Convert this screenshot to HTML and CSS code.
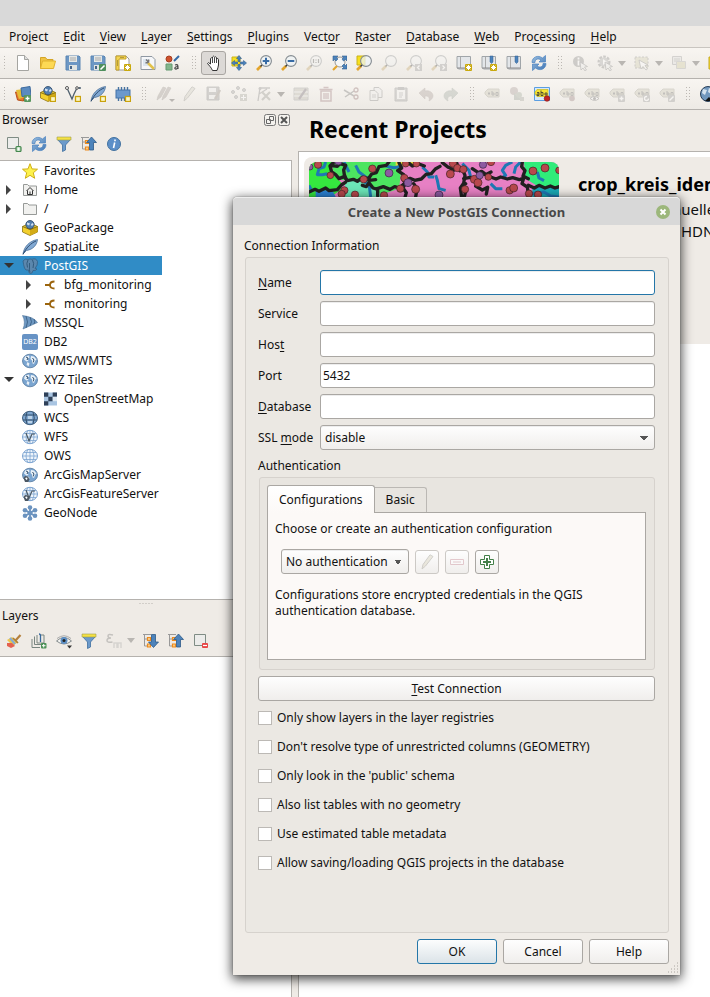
FILE: index.html
```html
<!DOCTYPE html>
<html lang="en">
<head>
<meta charset="utf-8">
<title>QGIS</title>
<link rel="stylesheet" href="styles.css">
</head>
<body>
<svg class="sprite" aria-hidden="true">
  <defs>
    <linearGradient id="gb" x1="0" y1="0" x2="1" y2="1"><stop offset="0" stop-color="#9cbfe0"/><stop offset="1" stop-color="#3f76b5"/></linearGradient>
  </defs>
  <symbol id="star-badge" viewBox="0 0 16 16"><rect x="9" y="9" width="7" height="7" rx="1" fill="#c9a90d"/><path d="M12.500 10v5M10 12.500h5M10.700 10.700l3.600 3.600M14.300 10.700l-3.600 3.600" stroke="#fff" stroke-width="1"/></symbol>
  <symbol id="box-badge" viewBox="0 0 16 16"><rect x="10.500" y="10.500" width="5" height="5" fill="#fcf7c6" stroke="#c9a20d" stroke-width="1.300"/></symbol>
  <symbol id="new" viewBox="0 0 16 16"><path d="M2.500.5h7l4 4v11h-11z" fill="#fff" stroke="#a5a5a1"/><path d="M9.500.5v4h4" fill="#ddd" stroke="#a5a5a1"/></symbol>
  <symbol id="open" viewBox="0 0 16 16"><path d="M.5 13.500v-11h5l1.500 2h6v3" fill="#f0c344" stroke="#d4a526"/><path d="M.5 13.500l2-7.500h13l-2 7.500z" fill="#fdd954" stroke="#dfb12f"/></symbol>
  <symbol id="save" viewBox="0 0 16 16"><path d="M1 1h13l1 1v13H1z" fill="#6d97c4" stroke="#5a86b3"/><path d="M4 1h8v6H4z" fill="#e5e8e6"/><path d="M5 3h6M5 5h6" stroke="#aaa"/><path d="M4 10h8v5H4z" fill="#e1e4e1"/><path d="M5 11h2v3H5z" fill="#47658a"/></symbol>
  <symbol id="saveas" viewBox="0 0 16 16"><use href="#save"/><rect x="9" y="9" width="7" height="7" rx="1" fill="#4e8f5d"/><path d="M10.500 14.500l4-4" stroke="#fff" stroke-width="1.600"/></symbol>
  <symbol id="layout" viewBox="0 0 16 16"><path d="M1 1h10l3 3v11H1z" fill="#fff" stroke="#999"/><path d="M1 1h10v3H4v11H1z" fill="#f3d553" stroke="#c5a22d"/><path d="M2 6h1M2 8h1M2 10h1M6 2v1M8 2v1" stroke="#776322"/><use href="#star-badge"/></symbol>
  <symbol id="layoutman" viewBox="0 0 16 16"><path d="M1 1.500h11l3 3v10H1z" fill="#f6f7f9" stroke="#8f98a2"/><path d="M3 4h6v7H3z" fill="#dce6f0"/><path d="M8 8l6 6" stroke="#e2c24b" stroke-width="2.500"/><path d="M6 4.500l3 3M5.500 7.500c2 1 4-1 3-3" fill="none" stroke="#777" stroke-width="1.500"/></symbol>
  <symbol id="style" viewBox="0 0 16 16"><circle cx="4" cy="4" r="3" fill="#cf512c" stroke="#a43e20"/><path d="M9 6l5-5" stroke="#346aa5" stroke-width="2"/><path d="M1 9h6v6H1z" fill="#83b58b" stroke="#649a70"/><path d="M10 10c3-1 3 0 3 4M13 11.500c-4 0-4 3-1.500 2.500L13 13" fill="none" stroke="#444" stroke-width="1.200"/></symbol>
  <symbol id="hand" viewBox="0 0 16 16"><path d="M4.500 9V3.500q1-1.500 2 0V2q1-1.700 2 0v.500q1-1.500 2 0V4q1.700-1.300 2 .5V10q-.5 3-1.500 5.500H6.500C5 12 3 10.500 1.500 8.500q.500-2 3 .500z" fill="#fff" stroke="#333"/><path d="M6.500 3.500V8M8.500 3v5M10.500 4v4" stroke="#333" stroke-width=".9"/></symbol>
  <symbol id="panto" viewBox="0 0 16 16"><path d="M1 2h8v9H1z" fill="#f7e01d" stroke="#c9b21a"/><path d="M8 .5l2.500 3h-1.500v3H7v-3H5.500zM8 15.500l2.500-3h-1.500v-3H7v3H5.500zM.5 8l3-2.500v1.500h3v2h-3v1.500zM15.500 8l-3-2.500v1.500h-3v2h3v1.500z" fill="#4c83bb" stroke="#335f91" stroke-width=".6"/></symbol>
  <symbol id="lens" viewBox="0 0 16 16"><path d="M1 15l4-4" stroke="#e3a52d" stroke-width="2.600"/><path d="M4.500 11.500l2-2" stroke="#333" stroke-width="1.500"/><circle cx="10" cy="6" r="5.400" fill="#eef3f6" fill-opacity=".75" stroke="#858c91" stroke-width="1.100"/></symbol>
  <symbol id="zin" viewBox="0 0 16 16"><use href="#lens"/><path d="M10 2.700v6.600M6.700 6h6.600" stroke="#376ba5" stroke-width="2"/></symbol>
  <symbol id="zout" viewBox="0 0 16 16"><use href="#lens"/><path d="M6.700 6h6.600" stroke="#376ba5" stroke-width="2"/></symbol>
  <symbol id="znat" viewBox="0 0 16 16"><use href="#lens"/><path d="M7.500 4v4M12.500 4v4M10 4.500v1M10 7v1" stroke="#555" stroke-width="1.200"/></symbol>
  <symbol id="zfull" viewBox="0 0 16 16"><circle cx="9" cy="7" r="5" fill="#f5f6f6" stroke="#999"/><path d="M2 15l4-4" stroke="#e3a52d" stroke-width="2.200"/><path d="M2 1h5L5.500 2.500 7 4 5 6 3.500 4.500 2 6zM16 1v5l-1.500-1.500L12.500 6 11 4l1.500-1.500L11 1zM16 14h-5l1.500-1.500L11 11l2-2 1.500 1.500L16 9z" fill="#4c83bb" stroke="#335f91" stroke-width=".6"/></symbol>
  <symbol id="zsel" viewBox="0 0 16 16"><path d="M1 1h8v9H1z" fill="#f7e01d" stroke="#c9b21a"/><use href="#lens"/></symbol>
  <symbol id="zlast" viewBox="0 0 16 16"><use href="#lens"/><rect x="9" y="9" width="7" height="7" fill="#999"/><path d="M13.500 10.500l-2 2 2 2" stroke="#fff" fill="none" stroke-width="1.300"/></symbol>
  <symbol id="znext" viewBox="0 0 16 16"><use href="#lens"/><rect x="9" y="9" width="7" height="7" fill="#999"/><path d="M11.500 10.500l2 2-2 2" stroke="#fff" fill="none" stroke-width="1.300"/></symbol>
  <symbol id="book" viewBox="0 0 16 16"><path d="M1 1.500h13.500v12.500H2.500L1 12.500z" fill="#e3e6e9" stroke="#a0a5a9"/><path d="M4.500 2v11" stroke="#aaa"/><path d="M1 13h13" stroke="#888"/></symbol>
  <symbol id="book3" viewBox="0 0 16 16"><use href="#book"/><use href="#star-badge"/></symbol>
  <symbol id="bookmark" viewBox="0 0 16 16"><use href="#book"/><path d="M9 1h3v6l-1.500 1.500L9 7z" fill="#4c83bb" stroke="#335f91" stroke-width=".5"/></symbol>
  <symbol id="bookmarkn" viewBox="0 0 16 16"><use href="#bookmark"/><use href="#star-badge"/></symbol>
  <symbol id="refresh" viewBox="0 0 16 16"><path d="M1 7.500C1 2 7-.5 11.500 3L14.500.5V7H8l2-2C7 3 4 4 4 7.500zM15 8.500C15 14 9 16.500 4.500 13l-3 2.500V9H8l-2 2c3 2 6 1 6-2.500z" fill="url(#gb)" stroke="#4b83c0" stroke-width=".7"/></symbol>
  <symbol id="cursor" viewBox="0 0 16 16"><path d="M8 7l1 8 2-2 2 3 1.500-1-2-3 3-.5z" fill="#eee" stroke="#777" stroke-width=".8"/></symbol>
  <symbol id="ident" viewBox="0 0 16 16"><circle cx="6.500" cy="6.500" r="5.500" fill="#888"/><path d="M6.500 2.500v2M6.500 5.500v5" stroke="#fff" stroke-width="1.800"/><use href="#cursor"/></symbol>
  <symbol id="action" viewBox="0 0 16 16"><circle cx="7" cy="7" r="5" fill="none" stroke="#888" stroke-width="3" stroke-dasharray="2.500 1.200"/><circle cx="7" cy="7" r="4.500" fill="#aaa"/><path d="M6 4l4 3-4 3z" fill="#fff"/><use href="#cursor"/></symbol>
  <symbol id="select" viewBox="0 0 16 16"><path d="M1 2h13v11H1z" fill="#d5cf98" stroke="#888" stroke-dasharray="2 1.500"/><path d="M5 5l2 9 2-2.500L12 15l1.500-1L11 10.500l3-.5z" fill="#fff" stroke="#777" stroke-width=".8"/></symbol>
  <symbol id="desel" viewBox="0 0 16 16"><path d="M1.500 1.500h9v8h-9z" fill="#ddd" stroke="#999"/><path d="M3 4h6M3 6h6" stroke="#999"/><path d="M5.500 6.500h9v7h-9z" fill="#d8ce78" stroke="#aaa"/></symbol>
  <symbol id="yellow" viewBox="0 0 16 16"><path d="M1 2h14v12H1z" fill="#f5d829" stroke="#c5a81f"/></symbol>
  <symbol id="dsm" viewBox="0 0 16 16"><path d="M.5 6l9 1-1 8-6-1z" fill="#e6782e" stroke="#b8501a"/><path d="M1 4l8-1 1 8-6 2z" fill="#e4bd35"/><path d="M6 2l9-1.500 1 9-9 1z" fill="#5b8bc0" stroke="#3e6a9d"/><rect x="9" y="9" width="7" height="7" rx="1" fill="#58965f"/><path d="M12.500 10.500v4M10.500 12.500h4" stroke="#fff" stroke-width="1.300"/></symbol>
  <symbol id="gpkg" viewBox="0 0 16 16"><path d="M.5 6.500L8 3l7.500 3.500V12L8 15.500.5 12z" fill="#f2cf2d" stroke="#8d7415" stroke-width=".8"/><path d="M8 9.500l7.500-3V12L8 15.500z" fill="#d3ab16"/><circle cx="8" cy="4.700" r="4.200" fill="#537fb0" stroke="#2c4666" stroke-width=".8"/><path d="M5 2.500l3 1-1 2-2-1zM9 4l2-1 .5 2-2 1z" fill="#d4e2f0"/><path d="M.5 6.500L8 9.500l7.500-3" stroke="#6b5a17" fill="none" stroke-width=".8"/></symbol>
  <symbol id="gpkgn" viewBox="0 0 16 16"><use href="#gpkg"/><use href="#box-badge"/></symbol>
  <symbol id="vec" viewBox="0 0 16 16"><path d="M2 2l5 11 2-5 3-6h3" fill="none" stroke="#4f606e" stroke-width="1.300"/><circle cx="2" cy="2" r="1.500" fill="#fff" stroke="#555"/><circle cx="12" cy="2" r="1.300" fill="#fff" stroke="#555"/><circle cx="15" cy="2" r="1" fill="#567"/></symbol>
  <symbol id="vecn" viewBox="0 0 16 16"><use href="#vec"/><use href="#box-badge"/></symbol>
  <symbol id="feather" viewBox="0 0 16 16"><path d="M1 15C2 8 7 2 15.500.500 15 6 11 10.500 4.500 11.500z" fill="#82a9d3" stroke="#4d719a" stroke-width=".8"/><path d="M1 15.500C4 9 9 4 14 2" fill="none" stroke="#304d6e"/></symbol>
  <symbol id="feathern" viewBox="0 0 16 16"><use href="#feather"/><use href="#box-badge"/></symbol>
  <symbol id="chip" viewBox="0 0 16 16"><path d="M3.500 1v14M6.500 1v14M9.500 1v14M12.500 1v14" stroke="#47729f" stroke-width="1.400"/><rect x="1" y="4" width="14" height="8" fill="#6b99cd" stroke="#4473a8"/><use href="#box-badge"/></symbol>
  <symbol id="pens" viewBox="0 0 16 16"><path d="M1 14l1-4 5-9 3 1-5 9zM6 14l1-4 5-9 3 1-5 9z" fill="#a5968c" stroke="#8b7d74" stroke-width=".6"/></symbol>
  <symbol id="pencil" viewBox="0 0 16 16"><path d="M3 15l1-4.500L11 .8l3 1.700L6.500 12z" fill="#d6d1b9" stroke="#96948a"/></symbol>
  <symbol id="saveed" viewBox="0 0 16 16"><path d="M1 1h12v13H1z" fill="#999" stroke="#888"/><path d="M3 2h7v4H3zM3 9h7v4H3z" fill="#eee"/><path d="M9 13l5-9" stroke="#987" stroke-width="2.500"/></symbol>
  <symbol id="points" viewBox="0 0 16 16"><g fill="#aaa" stroke="#888"><circle cx="2" cy="6" r="1.500"/><circle cx="7" cy="2" r="1.500"/><circle cx="13" cy="4" r="1.500"/><circle cx="5" cy="11" r="1.500"/></g><rect x="9" y="8" width="7" height="7" fill="#aa9"/><path d="M12.500 9v5M10 11.500h5" stroke="#fff"/></symbol>
  <symbol id="vertex" viewBox="0 0 16 16"><path d="M2 15L4 2h10M3 8l8-5" fill="none" stroke="#888" stroke-width="1.300"/><path d="M6 6l8 8M14 6l-8 8" stroke="#998" stroke-width="2.200"/><circle cx="4" cy="2.500" r="1.500" fill="#888"/></symbol>
  <symbol id="formed" viewBox="0 0 16 16"><path d="M1 2h14v12H1z" fill="#bdb7a0" stroke="#999"/><path d="M1 6h14M1 10h14" stroke="#eee"/><path d="M6 13l7-10" stroke="#767" stroke-width="2.200"/></symbol>
  <symbol id="trash" viewBox="0 0 16 16"><path d="M3 5h10v10H3z" fill="none" stroke="#b56f78" stroke-width="1.500"/><path d="M1.500 3.500h13M5.500 1.500h5M6 7v6M8 7v6M10 7v6" stroke="#b56f78" stroke-width="1.300"/></symbol>
  <symbol id="cut" viewBox="0 0 16 16"><path d="M1 4l10 6M2 11l9-6" stroke="#777" stroke-width="1.500"/><circle cx="13" cy="4" r="2" fill="none" stroke="#a66" stroke-width="1.300"/><circle cx="13" cy="11" r="2" fill="none" stroke="#a66" stroke-width="1.300"/></symbol>
  <symbol id="copy" viewBox="0 0 16 16"><path d="M6 1.500h5l3 3v7H6z" fill="#eee" stroke="#888"/><path d="M2 4.500h5l3 3v7H2z" fill="#eee" stroke="#888"/><path d="M4 9h4M4 11h4" stroke="#999"/></symbol>
  <symbol id="paste" viewBox="0 0 16 16"><path d="M2 2h12v13H2z" fill="#aaa" stroke="#888"/><path d="M4 4h8v9H4z" fill="#f4f4f4"/><path d="M5 1h6v3H5z" fill="#888"/><path d="M6 7h4M6 9h4M6 11h3" stroke="#999"/></symbol>
  <symbol id="undo" viewBox="0 0 16 16"><path d="M1 7l6-5v3c5-1 8 2 8 5 0 2-2 4-4 5 1-3 0-5-4-5v3z" fill="#b39c93" stroke="#a1887d" stroke-width=".6"/></symbol>
  <symbol id="redo" viewBox="0 0 16 16"><path d="M15 7L9 2v3c-5-1-8 2-8 5 0 2 2 4 4 5-1-3 0-5 4-5v3z" fill="#9dab9d" stroke="#879787" stroke-width=".6"/></symbol>
  <symbol id="tag" viewBox="0 0 16 16"><path d="M1 6l3-3h11v8H4L1 8z" fill="#cfc8a2" stroke="#aaa48a"/><path d="M4 7.500h2M5 6v3M8 5v4h2V7H8M14 6.500h-2v3h2z" stroke="#666" fill="none"/></symbol>
  <symbol id="diag" viewBox="0 0 16 16"><circle cx="5" cy="5" r="4" fill="#b59a94"/><path d="M5 7l8 7H5z" fill="#92a68f"/><circle cx="10" cy="9" r="3" fill="#9eae94"/><rect x="11" y="11" width="4" height="4" fill="#aa9"/></symbol>
  <symbol id="tagon" viewBox="0 0 16 16"><path d="M.5 1.500h15v13H.5z" fill="#d7e9fa" stroke="#5a9ee2"/><path d="M1 6l2-2.500h11v7H3L1 8z" fill="#f5e332" stroke="#c9b71a" stroke-width=".7"/><path d="M3 6.500h2v3H3v-1.500h2M7 4.500v5h2V6.500H7M11 7h2v2h-2z" stroke="#333" stroke-width=".8" fill="none"/><circle cx="13" cy="12.500" r="2.800" fill="#c22424" stroke="#8c1515" stroke-width=".6"/></symbol>
  <symbol id="tagpin" viewBox="0 0 16 16"><use href="#tag"/><circle cx="13" cy="12.500" r="2.800" fill="#b07f7c"/></symbol>
  <symbol id="tageye" viewBox="0 0 16 16"><use href="#tag"/><path d="M6 12.500q4-4 9 0-4 4-9 0z" fill="#fff" stroke="#777"/><circle cx="10.500" cy="12.500" r="1.500" fill="#666"/></symbol>
  <symbol id="tagplus" viewBox="0 0 16 16"><use href="#tag"/><rect x="9" y="9" width="7" height="7" rx="1" fill="#999"/><path d="M12.500 10.500v4M10.500 12.500h4" stroke="#fff" stroke-width="1.500"/></symbol>
  <symbol id="tagrot" viewBox="0 0 16 16"><use href="#tag"/><rect x="9" y="9" width="7" height="7" rx="1" fill="#999"/><circle cx="12.500" cy="12.500" r="2" stroke="#fff" fill="none" stroke-width="1.300" stroke-dasharray="9 3"/></symbol>
  <symbol id="taged" viewBox="0 0 16 16"><use href="#tag"/><rect x="9" y="9" width="7" height="7" rx="1" fill="#999"/><path d="M10.500 14.500l4-4" stroke="#fff" stroke-width="1.500"/></symbol>
  <symbol id="metas" viewBox="0 0 16 16"><circle cx="8" cy="8" r="7.500" fill="#7197bd" stroke="#293f58"/><path d="M3 3l4 1-2 5-3-2zM9 2l4 2-2 4-3-2z" fill="#d5e2ee"/><path d="M5 15l4-4 2 2 5-2v4z" fill="#111"/></symbol>
  <symbol id="addl" viewBox="0 0 16 16"><path d="M1.500 1.500h11v11h-11z" fill="#ececea" stroke="#7f8c84"/><rect x="10" y="10.500" width="5" height="5" rx="1" fill="#b9d8bb" stroke="#43874d" stroke-width="1.200"/><path d="M12.500 11.500v3M11 13h3" stroke="#fff" stroke-width=".8"/></symbol>
  <symbol id="reml" viewBox="0 0 16 16"><path d="M1.500 1.500h11v11h-11z" fill="#ececea" stroke="#7f8c84"/><rect x="9" y="10" width="6" height="5" rx="1" fill="#e84545"/><path d="M10 12.500h4" stroke="#fff" stroke-width="1.200"/></symbol>
  <symbol id="filter" viewBox="0 0 16 16"><path d="M1.500 3.500L6.500 9v6.500l3-1.500V9l5-5.500z" fill="#6c9acb" stroke="#3f6e9f" stroke-width=".8"/><path d="M1 1h14v3H1z" fill="#f5e143" stroke="#9b9a4d" stroke-width=".6"/></symbol>
  <symbol id="tree" viewBox="0 0 16 16"><path d="M1.500 1v12H4M1.500 6H4M0 1.500h8" fill="none" stroke="#999"/><path d="M4.500 4.500h3v3h-3zM4.500 11h3v3h-3z" fill="#f8d08e" stroke="#ee8b1e" stroke-width="1.200"/></symbol>
  <symbol id="collapse" viewBox="0 0 16 16"><use href="#tree"/><path d="M10.500 1L15.500 6.500h-3V14H8.500V6.500H5.500z" fill="#4d83bb" stroke="#2e5a88" stroke-width=".8"/></symbol>
  <symbol id="expand" viewBox="0 0 16 16"><use href="#tree"/><path d="M10.500 14.500L15.500 9h-3V1.500H8.500V9H5.500z" fill="#4d83bb" stroke="#2e5a88" stroke-width=".8"/></symbol>
  <symbol id="info" viewBox="0 0 16 16"><circle cx="8" cy="8" r="6.500" fill="#5c8fc8" stroke="#43729f"/><path d="M9 3.500v1.800M8.700 6.500L7.500 12" stroke="#fff" stroke-width="1.600"/></symbol>
  <symbol id="fav" viewBox="0 0 16 16"><path d="M8 .700l2 5.200 5.500.300-4.200 3.600 1.400 5.500L8 12.300l-4.700 3 1.400-5.500L.5 6.200 6 5.900z" fill="#fdf24c" stroke="#cfae17"/></symbol>
  <symbol id="folder" viewBox="0 0 16 16"><path d="M1.500 13.500v-11h4l1.500 1.500h7.500v9.500z" fill="#f1f1ef" stroke="#979a98"/></symbol>
  <symbol id="home" viewBox="0 0 16 16"><use href="#folder"/><path d="M4.500 9L8 5.500 11.500 9M5.500 8.500v4h5v-4M8 12V9.500" fill="none" stroke="#333"/></symbol>
  <symbol id="pg" viewBox="0 0 16 16"><path d="M1 3Q3 0 6 1.500 8 .5 10 1.300 14-.3 15.500 3.500 16 7 13 10.500l2 .5q-1 2-4 1.500-.5 3-2.500 3T6.500 12q-3 1-4-2T1 3z" fill="#5b87ad" stroke="#335f85" stroke-width=".8"/><path d="M6 2Q4 5 5.500 9.500M10.500 2Q12.500 5 11 10M7.500 5v4Q7 12 8 14.500" fill="none" stroke="#2d5677" stroke-width=".9"/></symbol>
  <symbol id="conn" viewBox="0 0 16 16"><path d="M3 8h5M12.500 4.500C6.500 4.500 6.500 11.500 12.500 11.500" fill="none" stroke="#9b640d" stroke-width="1.800"/></symbol>
  <symbol id="mssql" viewBox="0 0 16 16"><path d="M.5.500Q12 2 15.500 7.500L1 14Q4 7 .5.500z" fill="#6e98c2" stroke="#50779e" stroke-width=".6"/><path d="M4 1q3 6 0 12M8 2q3 5 0 9M12 4q1.500 3 0 5" fill="none" stroke="#34597f" stroke-width=".8"/></symbol>
  <symbol id="gl" viewBox="0 0 16 16"><ellipse cx="8" cy="8" rx="7.500" ry="6.800" fill="#7ba5d0" stroke="#52779e" stroke-width=".8"/><path d="M3 3.500l4-1 .5 2L5.500 6l1 2-2 .5L2 6.500zM9 3l3 .5 2.500 3-1.500 1.500-1 3-2-1V7.500L8.500 6zM5.500 9l2 1.500-1 3-2-2z" fill="#e8f0f7"/><path d="M4 4l2 1-1 2M10.500 5l1.500 2-1 2.500" fill="none" stroke="#304d6b"/></symbol>
  <symbol id="grid" viewBox="0 0 16 16"><ellipse cx="8" cy="8" rx="7.500" ry="6.700" fill="#edf4fb" stroke="#7ba3d0"/><path d="M.5 8h15M2 4.500h12M2 11.500h12M8 1.500v13M6 1.500Q2 8 6 14.500M10 1.500q4 6.500 0 13" fill="none" stroke="#7ba3d0" stroke-width=".8"/></symbol>
  <symbol id="wcs" viewBox="0 0 16 16"><ellipse cx="8" cy="8" rx="7.500" ry="6.700" fill="#7ea6d0" stroke="#40607f"/><path d="M1 5h14M1 10h14M5 2Q2.500 8 5 14M11 2q2.500 6 0 12" fill="none" stroke="#34506c"/><path d="M6 6h4v3H6zM6 11h4v2H6z" fill="#bcd3e8"/></symbol>
  <symbol id="wfs" viewBox="0 0 16 16"><use href="#grid"/><path d="M4 4l3 8 3-7h3" fill="none" stroke="#4a5965" stroke-width="1.200"/></symbol>
  <symbol id="arc" viewBox="0 0 16 16"><path d="M1.500 11l1.500-2 3 .5 1.500 3-1.500 2.500H3z" fill="#4b5763"/><path d="M3 11l2-.5.500 1.500-1 1z" fill="#fff"/></symbol>
  <symbol id="ams" viewBox="0 0 16 16"><use href="#gl"/><use href="#arc"/></symbol>
  <symbol id="afs" viewBox="0 0 16 16"><use href="#wfs"/><use href="#arc"/></symbol>
  <symbol id="xyz" viewBox="0 0 16 16"><path d="M2 1.500h13v13H2z" fill="#a9c5e2"/><path d="M2 1.500h4.300v4.300H2zM10.700 1.500H15v4.300h-4.300zM6.300 5.800h4.400v4.400H6.300zM2 10.200h4.300v4.300H2z" fill="#2f4058"/><path d="M10.700 5.800H15v4.400h-4.300z" fill="#dfe9f3"/></symbol>
  <symbol id="node" viewBox="0 0 16 16"><g stroke="#6b93bf" stroke-width="1.800"><path d="M8 2v12M3 5l10 6M13 5L3 11"/></g><g fill="#6b93bf"><circle cx="8" cy="2.500" r="2.300"/><circle cx="8" cy="13.500" r="2.300"/><circle cx="3" cy="5.200" r="2.300"/><circle cx="13" cy="5.200" r="2.300"/><circle cx="3" cy="10.800" r="2.300"/><circle cx="13" cy="10.800" r="2.300"/><circle cx="8" cy="8" r="2.500"/></g></symbol>
  <symbol id="brush" viewBox="0 0 16 16"><path d="M9 8l5.500-6" stroke="#b5803c" stroke-width="2.200"/><path d="M1 7l5-3 6 5-5 4z" fill="#efc649"/><path d="M1 10l5 0 3 3-4 2-4-2z" fill="#e4614f"/><path d="M4 5l5 6" stroke="#85abd4" stroke-width="2"/><path d="M7 5l5 5" stroke="#ab7c38" stroke-width="1.600"/></symbol>
  <symbol id="group" viewBox="0 0 16 16"><path d="M1 6v8.500h8M3.500 3.500v8h8M6 2v8h7V2H10" fill="none" stroke="#788580"/><path d="M9.500 9V3q0-2-1.500-2" fill="none" stroke="#35679c" stroke-width="1.300"/><rect x="10" y="10" width="5.500" height="5.500" rx="1" fill="#4c9157"/><path d="M12.700 11v3.500M11 12.700h3.500" stroke="#fff"/></symbol>
  <symbol id="eye" viewBox="0 0 16 16"><path d="M.5 8Q8 1 15.500 8 8 14 .5 8z" fill="#f5f5f3" stroke="#848a8c"/><path d="M1 5.500Q8 0 15 5.500" fill="none" stroke="#aaa"/><circle cx="8" cy="7.500" r="3.500" fill="#5d8fc4"/><circle cx="8" cy="7.500" r="1.500" fill="#222"/><path d="M11 12.500h5l-2.500 3z" fill="#333"/></symbol>
  <symbol id="eps" viewBox="0 0 16 16"><path d="M7 2Q2 .5 2 3q0 2 3 2-4 0-4 2.500T6.500 9" fill="none" stroke="#777" stroke-width="1.500"/><path d="M8 15v-5h3v5M12 15v-5h3v5" fill="none" stroke="#aaa" stroke-width="1.500"/></symbol>
  <symbol id="minus" viewBox="0 0 16 16"><path d="M1.500 5.500h13v5h-13zM4 8h8" fill="#fff" stroke="#c58591"/></symbol>
  <symbol id="plus" viewBox="0 0 16 16"><path d="M5.500 1.500h5v4h4v5h-4v4h-5v-4h-4v-5h4z" fill="#fff" stroke="#438049"/><path d="M8 4v8M4 8h8" stroke="#438049" stroke-width="2"/></symbol>
</svg>

<div class="app">
  <div class="window-title"></div>
  <nav class="menubar">
    <a href="#">Pro<u>j</u>ect</a><a href="#"><u>E</u>dit</a><a href="#"><u>V</u>iew</a><a href="#"><u>L</u>ayer</a><a href="#"><u>S</u>ettings</a><a href="#"><u>P</u>lugins</a><a href="#">Vect<u>o</u>r</a><a href="#"><u>R</u>aster</a><a href="#"><u>D</u>atabase</a><a href="#"><u>W</u>eb</a><a href="#">Pro<u>c</u>essing</a><a href="#"><u>H</u>elp</a>
  </nav>
  <div class="toolbar">
    <i class="handle first"></i>
    <button><svg><use href="#new"/></svg></button><button><svg><use href="#open"/></svg></button><button><svg><use href="#save"/></svg></button><button><svg><use href="#saveas"/></svg></button><button><svg><use href="#layout"/></svg></button><button><svg><use href="#layoutman"/></svg></button><button><svg><use href="#style"/></svg></button>
    <i class="handle"></i>
    <button class="pressed"><svg><use href="#hand"/></svg></button><button><svg><use href="#panto"/></svg></button><button><svg><use href="#zin"/></svg></button><button><svg><use href="#zout"/></svg></button><button disabled><svg><use href="#znat"/></svg></button><button><svg><use href="#zfull"/></svg></button><button><svg><use href="#zsel"/></svg></button><button disabled><svg><use href="#lens"/></svg></button><button disabled><svg><use href="#zlast"/></svg></button><button disabled><svg><use href="#znext"/></svg></button><button><svg><use href="#book3"/></svg></button><button><svg><use href="#bookmarkn"/></svg></button><button><svg><use href="#bookmark"/></svg></button><button><svg><use href="#refresh"/></svg></button>
    <i class="handle"></i>
    <button disabled><svg><use href="#ident"/></svg></button><button class="drop" disabled><svg><use href="#action"/></svg></button><button class="drop" disabled><svg><use href="#select"/></svg></button><button class="drop" disabled><svg><use href="#desel"/></svg></button><button><svg><use href="#yellow"/></svg></button>
  </div>
  <div class="toolbar">
    <i class="handle first"></i>
    <button><svg><use href="#dsm"/></svg></button><button><svg><use href="#gpkgn"/></svg></button><button><svg><use href="#vecn"/></svg></button><button><svg><use href="#feathern"/></svg></button><button><svg><use href="#chip"/></svg></button>
    <i class="handle"></i>
    <button class="mini" disabled><svg><use href="#pens"/></svg></button><button disabled><svg><use href="#pencil"/></svg></button><button disabled><svg><use href="#saveed"/></svg></button><button disabled><svg><use href="#points"/></svg></button><button class="drop" disabled><svg><use href="#vertex"/></svg></button><button disabled><svg><use href="#formed"/></svg></button><button disabled><svg><use href="#trash"/></svg></button><button disabled><svg><use href="#cut"/></svg></button><button disabled><svg><use href="#copy"/></svg></button><button disabled><svg><use href="#paste"/></svg></button><button disabled><svg><use href="#undo"/></svg></button><button disabled><svg><use href="#redo"/></svg></button>
    <i class="handle"></i>
    <button disabled><svg><use href="#tag"/></svg></button><button disabled><svg><use href="#diag"/></svg></button><button><svg><use href="#tagon"/></svg></button><button disabled><svg><use href="#tagpin"/></svg></button><button disabled><svg><use href="#tageye"/></svg></button><button disabled><svg><use href="#tagplus"/></svg></button><button disabled><svg><use href="#tagrot"/></svg></button><button disabled><svg><use href="#taged"/></svg></button>
    <i class="handle"></i>
    <button><svg><use href="#metas"/></svg></button>
  </div>

  <div class="main">
    <aside class="docks">
      <section class="dock browser">
        <header class="dock-title"><span>Browser</span>
          <button aria-label="Float"><svg viewBox="0 0 12 12"><rect x=".5" y=".5" width="11" height="11" rx="2" fill="#f4f2ee" stroke="#777"/><path d="M5.500 2.500h4v4h-4zM2.500 5.500h4v4h-4z" fill="none" stroke="#666"/></svg></button>
          <button aria-label="Close"><svg viewBox="0 0 12 12"><rect x=".5" y=".5" width="11" height="11" rx="2" fill="#f4f2ee" stroke="#777"/><path d="M3 3l6 6M9 3l-6 6" stroke="#555" stroke-width="2"/></svg></button>
        </header>
        <div class="dock-tools"><button><svg><use href="#addl"/></svg></button><button><svg><use href="#refresh"/></svg></button><button><svg><use href="#filter"/></svg></button><button><svg><use href="#collapse"/></svg></button><button><svg><use href="#info"/></svg></button></div>
        <ul class="tree">
          <li><i></i><svg><use href="#fav"/></svg>Favorites</li>
          <li><i class="closed"></i><svg><use href="#home"/></svg>Home</li>
          <li><i class="closed"></i><svg><use href="#folder"/></svg>/</li>
          <li><i></i><svg><use href="#gpkg"/></svg>GeoPackage</li>
          <li><i></i><svg><use href="#feather"/></svg>SpatiaLite</li>
          <li class="selected"><i class="opened"></i><svg><use href="#pg"/></svg>PostGIS</li>
          <li class="child"><i class="closed"></i><svg><use href="#conn"/></svg>bfg_monitoring</li>
          <li class="child"><i class="closed"></i><svg><use href="#conn"/></svg>monitoring</li>
          <li><i></i><svg><use href="#mssql"/></svg>MSSQL</li>
          <li><i></i><span class="db2">DB2</span>DB2</li>
          <li><i></i><svg><use href="#gl"/></svg>WMS/WMTS</li>
          <li><i class="opened"></i><svg><use href="#gl"/></svg>XYZ Tiles</li>
          <li class="child"><i></i><svg><use href="#xyz"/></svg>OpenStreetMap</li>
          <li><i></i><svg><use href="#wcs"/></svg>WCS</li>
          <li><i></i><svg><use href="#wfs"/></svg>WFS</li>
          <li><i></i><svg><use href="#grid"/></svg>OWS</li>
          <li><i></i><svg><use href="#ams"/></svg>ArcGisMapServer</li>
          <li><i></i><svg><use href="#afs"/></svg>ArcGisFeatureServer</li>
          <li><i></i><svg><use href="#node"/></svg>GeoNode</li>
        </ul>
      </section>
      <div class="splitter"></div>
      <section class="dock layers">
        <header class="dock-title"><span>Layers</span></header>
        <div class="dock-tools"><button><svg><use href="#brush"/></svg></button><button><svg><use href="#group"/></svg></button><button><svg><use href="#eye"/></svg></button><button><svg><use href="#filter"/></svg></button><button class="drop" disabled><svg><use href="#eps"/></svg></button><button><svg><use href="#expand"/></svg></button><button><svg><use href="#collapse"/></svg></button><button><svg><use href="#reml"/></svg></button></div>
        <div class="layer-list"></div>
      </section>
    </aside>
    <main class="welcome">
      <h1>Recent Projects</h1>
      <div class="projects">
        <article class="project">
          <svg class="thumb" viewBox="0 0 750 531" aria-label="Project map">
            <rect width="750" height="531" fill="#e780c4"/>
            <path d="M0 0h75l-10 30 35 35-5 20-40 25H0z" fill="#35e83f"/>
            <path d="M75 0h205l-10 80-60 20-45-50-65 5-30-30z" fill="#4ce560"/>
            <path d="M110 60l50-10 60 50 20 60H90z" fill="#6ce6b8"/>
            <path d="M20 85h50l15 30H20z" fill="#2b82d5"/>
            <path d="M645 0h105v80l-60-5-40-25z" fill="#30ec7a"/>
            <path d="M670 75h80v60h-80z" fill="#18a9b6"/>
            <path d="M260 0h55v12h-55z" fill="#e9dc3b"/>
            <g fill="none" stroke="#1f78b4" stroke-width="9" stroke-linejoin="round">
              <path d="M50 0l-5 15-15 5-5 18h15l15-3M105 0l15 30M140 10l10 20 20 15 10 5M230 12l25 5 25-5M185 105l-5-40-15-5M340 15l15 15 5 15 15 0M380 40l5 15 5 25 20 5M610 0l-20 10-10 15 10 15-12 8M685 30l5 18 15 8M635 0l-15 15-5 20M545 65l15 15 20 0M0 70l10 20M665 95l40-5 20 12 25 3M460 5l20 20 5 20"/>
            </g>
            <g fill="none" stroke="#202020" stroke-width="10" stroke-linejoin="round" stroke-linecap="round">
              <path d="M75 0l-12 12 5 18 12 8 10 12 15-6 10 12 18-4 12 6 15-12 18 4 10-14 14-4 8-18 22-4 8-10M65 10l20 3 8-8 17 5-6 14 2 14 6 14M0 90l18-8 12 6 20-10 10 8 25-3 12-14 12-8M150 55l18-8 12 8 20-2M160 70l12 4 8-12 12 16 14 4 0 20M205 80l18-6 20 8 14-8 14 4 16-14 14 2M270 2l8 16-12 8 18 12 0 18M285 55l18-6 14 6 20-4 14-14 16-2 12-14 14-8M296 0l14 12 20-6 16 6M290 62l-8 16 10 14-4 14M320 105l4-25-10-15M400 2l18 14 18 8 6-10 20 12 6 14-4 24-10 14 4 28M442 0l10 26M464 50l20-4 14 8 20-18 12 2 16-8M490 20l18 12 10-4 16 12M500 72l20 12 16-8-4 20M545 45l16 6 14-6 20 6 16-4 20 6 14-6M470 65l-14 10 14 12-4 18M640 0l-2 14 10 12-6 16 16 8M645 45l-6 20 16 10 4 28M658 70l18 8 14-8 18 8 16-6 14 6 12-4"/>
            </g>
            <g fill="#b8484d" stroke="#432323" stroke-width="2">
              <circle cx="27" cy="8" r="11"/><circle cx="64" cy="40" r="10"/><circle cx="190" cy="20" r="11"/><circle cx="164" cy="52" r="11"/><circle cx="106" cy="85" r="11"/><circle cx="98" cy="96" r="11"/><circle cx="138" cy="98" r="11"/><circle cx="225" cy="100" r="11"/><circle cx="286" cy="48" r="11"/><circle cx="274" cy="80" r="11"/><circle cx="320" cy="82" r="12"/><circle cx="290" cy="5" r="10"/><circle cx="322" cy="5" r="10"/><circle cx="424" cy="36" r="12"/><circle cx="432" cy="5" r="11"/><circle cx="445" cy="18" r="11"/><circle cx="463" cy="22" r="11"/><circle cx="496" cy="52" r="12"/><circle cx="507" cy="62" r="12"/><circle cx="538" cy="45" r="10"/><circle cx="468" cy="82" r="11"/><circle cx="602" cy="85" r="11"/><circle cx="614" cy="78" r="12"/><circle cx="672" cy="27" r="12"/><circle cx="708" cy="18" r="12"/><circle cx="660" cy="95" r="11"/><circle cx="687" cy="98" r="11"/><circle cx="546" cy="0" r="11"/><circle cx="750" cy="25" r="10"/>
            </g>
            <g fill="#8c5aa0" stroke="#36233f" stroke-width="2"><circle cx="240" cy="33" r="12"/><circle cx="88" cy="-3" r="12"/><circle cx="297" cy="62" r="12"/><circle cx="390" cy="99" r="12"/><circle cx="512" cy="40" r="11"/><circle cx="522" cy="8" r="11"/><circle cx="3" cy="15" r="9"/></g>
          </svg>
          <div class="project-text"><h2>crop_kreis_iden</h2><p class="path">nuelle</p><p class="crs">HDN</p></div>
        </article>
      </div>
    </main>
  </div>

  <div class="dialog" role="dialog" aria-labelledby="dlg-title">
    <header class="dialog-title"><h2 id="dlg-title">Create a New PostGIS Connection</h2>
      <button aria-label="Close"><svg viewBox="0 0 14 14"><circle cx="7" cy="7" r="7" fill="#9cb77b"/><path d="M4.500 4.500l5 5M9.500 4.500l-5 5" stroke="#fff" stroke-width="2"/></svg></button>
    </header>
    <form class="dialog-body">
      <div class="caption">Connection Information</div>
      <div class="group outer">
        <div class="fields">
          <label for="name"><u>N</u>ame</label><input id="name" class="focused" type="text">
          <label for="service">Service</label><input id="service" type="text">
          <label for="host">Hos<u>t</u></label><input id="host" type="text">
          <label for="port">Port</label><input id="port" type="text" value="5432">
          <label for="db"><u>D</u>atabase</label><input id="db" type="text">
          <label for="ssl">SSL <u>m</u>ode</label><select id="ssl"><option>disable</option></select>
        </div>
        <div class="caption auth">Authentication</div>
        <div class="group inner">
          <div class="tabs" role="tablist"><button type="button" class="tab active" role="tab">Configurations</button><button type="button" class="tab" role="tab">Basic</button></div>
          <div class="tab-panel">
            <label for="cfg">Choose or create an authentication configuration</label>
            <div class="config-row">
              <select id="cfg"><option>No authentication</option></select>
              <button type="button" class="square" disabled aria-label="Edit"><svg><use href="#pencil"/></svg></button>
              <button type="button" class="square" disabled aria-label="Remove"><svg><use href="#minus"/></svg></button>
              <button type="button" class="square" aria-label="Add"><svg><use href="#plus"/></svg></button>
            </div>
            <p>Configurations store encrypted credentials in the QGIS authentication database.</p>
          </div>
        </div>
        <button type="button" class="btn test"><span><u>T</u>est Connection</span></button>
        <div class="checks">
          <label><input type="checkbox">Only show layers in the layer registries</label>
          <label><input type="checkbox">Don't resolve type of unrestricted columns (GEOMETRY)</label>
          <label><input type="checkbox">Only look in the 'public' schema</label>
          <label><input type="checkbox">Also list tables with no geometry</label>
          <label><input type="checkbox">Use estimated table metadata</label>
          <label><input type="checkbox">Allow saving/loading QGIS projects in the database</label>
        </div>
      </div>
      <footer class="actions"><button type="button" class="btn primary">OK</button><button type="button" class="btn">Cancel</button><button type="button" class="btn">Help</button></footer>
    </form>
    <svg class="grip" viewBox="0 0 12 12"><path d="M10 1h1M7 4h1M10 4h1M4 7h1M7 7h1M10 7h1M1 10h1M4 10h1M7 10h1M10 10h1" stroke="#aaa6a0"/></svg>
  </div>
</div>
</body>
</html>
```
FILE: styles.css
```css
* { box-sizing: border-box; }
body { margin: 0; background: #efebe6; color: #111; font: 12px/16px "Noto Sans", "Open Sans", sans-serif; }
button, input, select { font: inherit; color: inherit; }
button { padding: 0; border: 0; background: none; }
h1, h2, p, ul { margin: 0; padding: 0; }
u { text-decoration: underline; text-underline-offset: 2px; text-decoration-skip-ink: none; }
svg { display: block; flex: none; width: 16px; height: 16px; }
.sprite { position: absolute; width: 0; height: 0; }

.app { position: relative; display: flex; flex-direction: column; min-height: 100vh; overflow: hidden; }
.window-title { height: 26px; background: #d9d9d9; }
.menubar { display: flex; height: 21px; padding-left: 1px; overflow: hidden; }
.menubar a { padding: 3px 7px 0 8px; color: #111; text-decoration: none; white-space: nowrap; }

.toolbar { display: flex; align-items: center; height: 31px; overflow: hidden; border-top: 1px solid #c9c5c0; background: linear-gradient(#f8f5f1, #edeae5); }
.toolbar + .toolbar { height: 32px; border-top: 1px solid #b5b2ae; border-bottom: 1px solid #b5b2ae; }
.toolbar button, .dock-tools button { display: flex; flex: none; align-items: center; justify-content: center; width: 25px; height: 24px; }
.toolbar button:disabled svg, .dock-tools button:disabled svg { opacity: .35; filter: saturate(.5); }
.toolbar .pressed { border: 1px solid #a9a6a2; border-radius: 3px; background: #dcd9d6; }
.handle { flex: none; width: 16px; height: 16px; background: radial-gradient(circle, #bcb8b3 1px, transparent 1px) 0 0 / 3px 3px; background-clip: content-box; padding: 0 5px; }
.handle.first { width: 10px; padding: 0 4px 0 3px; }
.toolbar .drop, .dock-tools .drop { width: 37px; justify-content: flex-start; padding-left: 5px; gap: 5px; }
.drop::after { content: ""; border: 4px solid transparent; border-top: 5px solid #b9b6b2; border-bottom: 0; }
.mini::after { content: ""; align-self: flex-end; margin: 0 -3px 4px -3px; border: 3px solid transparent; border-top-color: #b9b6b2; border-bottom: 0; }

.main { display: flex; flex: 1; }
.docks { display: flex; flex: 0 1 292px; flex-direction: column; }
.dock { display: flex; flex-direction: column; }
.dock-title { display: flex; align-items: center; height: 19px; padding: 0 2px; gap: 2px; }
.dock-title span { flex: 1; }
.dock-title svg { width: 12px; height: 12px; }
.dock-tools { display: flex; align-items: center; height: 31px; padding: 0 1px; }
.browser .dock-tools { padding-bottom: 1px; }
.browser { min-height: 490px; }
.tree { flex: 1; border: 1px solid #b5b2ae; border-left: 0; background: #fff; list-style: none; }
.tree li { display: flex; align-items: center; width: 162px; height: 19px; padding-left: 5px; white-space: nowrap; }
.tree svg { margin-right: 6px; }
.tree .child { padding-left: 25px; }
.tree i { flex: none; width: 17px; height: 10px; }
.closed::before, .opened::before { content: ""; display: block; }
.closed::before { width: 0; margin-left: 1px; border: 5px solid transparent; border-left-color: #444; border-right: 0; }
.opened::before { width: 0; margin-top: 2px; margin-left: -1px; border: 5px solid transparent; border-top-color: #333; border-bottom: 0; }
.tree .selected { background: #308cc6; color: #fff; }
.db2 { width: 16px; height: 16px; margin-right: 6px; border-radius: 2px; background: #6793c5; color: #fff; font-size: 7px; text-align: center; }
.splitter { align-self: center; width: 16px; height: 6px; background: radial-gradient(circle, #b4b0ab 1px, transparent 1px) center / 3px 3px repeat-x; }
.layers { flex: 1; }
.layer-list { flex: 1; border: 1px solid #b5b2ae; border-width: 1px 1px 0 0; background: #fff; }

.welcome { display: flex; flex: 1; flex-direction: column; min-width: 0; margin-left: 6px; }
.welcome h1 { height: 41px; padding: 2px 11px; color: #000; font-size: 23px; line-height: 34px; }
.projects { flex: 1; padding: 5px 0 0 5px; overflow: hidden; border: 1px solid #b5b2ae; border-width: 1px 0 0 1px; background: #fff; }
.project { display: flex; gap: 19px; height: 187px; padding: 5px; border-radius: 8px 0 0 8px; background: #efebe6; }
.thumb { width: 250px; height: 177px; border-radius: 8px; }
.project-text { padding-top: 8px; font-size: 15px; line-height: 22px; white-space: nowrap; }
.project-text h2 { color: #000; font-size: 18px; line-height: 28px; }
.path { padding-left: 94px; }
.crs { padding-left: 103px; }

.dialog { position: absolute; inset: 197px 30px 22px 233px; display: flex; flex-direction: column; min-height: 778px; border-radius: 4px 4px 0 0; background: #efebe6; box-shadow: 0 3px 12px 1px rgba(0, 0, 0, .75), 0 0 1px #444; }
.dialog-title { display: flex; align-items: center; height: 28px; padding: 0 10px 0 24px; border-top: 1px solid #eee; border-radius: 4px 4px 0 0; background: #d8d8d8; color: #484848; }
.dialog-title h2 { flex: 1; font-size: 13px; text-align: center; }
.dialog-title svg { width: 14px; height: 14px; }
.dialog-body { display: flex; flex: 1; flex-direction: column; padding: 13px 11px 11px; }
.caption { line-height: 16px; }
.group { border: 1px solid #d6d2cd; border-radius: 3px; background: #ebe8e3; }
.outer { display: flex; flex: 1; flex-direction: column; margin: 3px 0 6px 1px; padding: 12px 13px 0 12px; }
.fields { display: grid; grid-template-columns: 56px 1fr; gap: 6px; align-items: center; }
.fields label { white-space: nowrap; }
input[type="text"], select { width: 100%; height: 25px; padding: 0 2px; border: 1px solid #aaa7a3; border-radius: 3px; outline: 0; background: #fff; box-shadow: inset 0 1px #ededed; }
input.focused { border-color: #2476a8; }
select { appearance: none; padding: 0 4px; background: conic-gradient(from -45deg at 50% 100%, #555 90deg, transparent 0) right 6px center / 8px 4px no-repeat, linear-gradient(#fefefe, #f0eeec); }
.auth { margin-top: 8px; }
.inner { margin: 3px 0 6px 1px; padding: 7px 8px 9px 7px; background: #e8e5e0; }
.tabs { display: flex; align-items: flex-end; height: 27px; }
.tab { height: 25px; padding: 0 11px; border: 1px solid #bbb8b4; border-left: 0; border-bottom: 0; border-radius: 0 3px 0 0; }
.tab.active { position: relative; z-index: 1; height: 28px; margin-bottom: -1px; border: 1px solid #aaa7a3; border-bottom: 0; border-radius: 3px 3px 0 0; background: linear-gradient(#fff, #fcf9f7); }
.tab-panel { min-height: 148px; padding: 8px 7px; border: 1px solid #aaa7a3; background: #fcf9f7; }
.config-row { display: flex; align-items: center; gap: 6px; margin: 12px 0 13px 6px; }
.config-row select { width: 128px; }
.square { display: flex; align-items: center; justify-content: center; width: 24px; height: 24px; border: 1px solid #aaa7a3; border-radius: 3px; background: linear-gradient(#fefefe, #f0eeec); }
.square:disabled { border-color: #ccc9c5; }
.square:disabled svg { opacity: .4; }
.btn { width: 80px; height: 25px; border: 1px solid #aaa7a3; border-radius: 3px; background: linear-gradient(#fefefe, #f0eeec); }
.test { width: 100%; }
.checks { display: grid; gap: 13px; margin-top: 9px; }
.checks label { display: flex; align-items: center; gap: 5px; }
.checks input { appearance: none; width: 14px; height: 14px; margin: 0; border: 1px solid #bcb9b5; background: #fff; }
.actions { display: flex; justify-content: flex-end; gap: 6px; }
.primary { border-color: #2476a8; background: linear-gradient(#fcfdfd, #dbe3e8); }
.grip { position: absolute; right: 1px; bottom: 1px; width: 12px; height: 12px; }
```
